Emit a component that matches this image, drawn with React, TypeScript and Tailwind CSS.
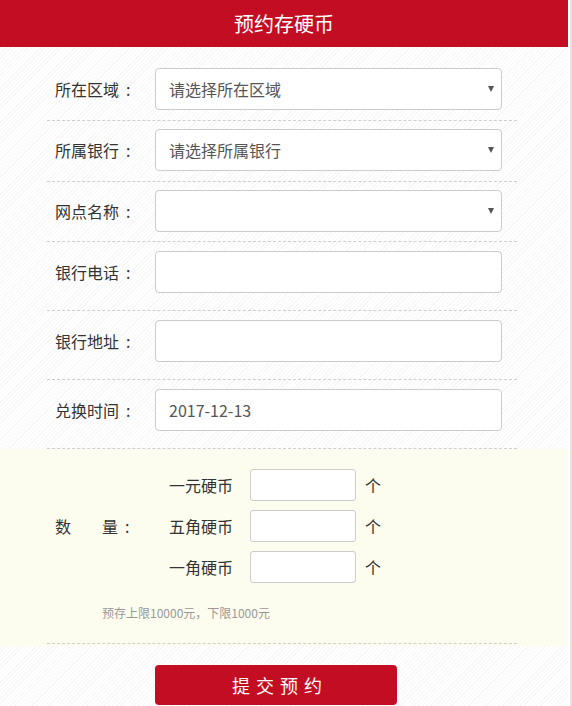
import React from 'react';

const font = { fontFamily: '"Noto Sans CJK SC", "Noto Sans", sans-serif' };

interface FieldProps {
    label: string;
    value?: string;
    select?: boolean;
    pad: string;
}

function Field({ label, value, select, pad }: FieldProps) {
    return (
        <div className={`flex items-center border-b border-dashed border-[#cfcfcf] ${pad}`}>
            <div className="flex w-[108px] pl-[8px] text-[16px] text-[#333]">
                {label}
                <span className="ml-[7px]">:</span>
            </div>
            <div className="relative flex h-[42px] w-[347px] items-center rounded-[4px] border border-[#cccccc] bg-white px-[13px] text-[16px] text-[#555]">
                {value}
                {select && (
                    <span className="absolute right-[7px] top-[17px] h-0 w-0 border-x-[3px] border-t-[6px] border-x-transparent border-t-[#555]" />
                )}
            </div>
        </div>
    );
}

function CoinRow({ label }: { label: string }) {
    return (
        <div className="flex items-center">
            <div className="w-[80px] text-right text-[16px] text-[#333]">{label}</div>
            <div className="ml-[17px] h-[32px] w-[106px] rounded-[3px] border border-[#cccccc] bg-white" />
            <div className="ml-[9px] text-[16px] text-[#333]">个</div>
        </div>
    );
}

export default function App() {
    return (
        <div style={font} className="flex h-[706px] w-[572px] overflow-hidden bg-white">
            <div className="flex h-full w-[568px] flex-col bg-[repeating-linear-gradient(135deg,#ffffff_0px,#ffffff_2px,#f7f7f7_2px,#f7f7f7_3px)]">
                <div className="flex h-[47px] shrink-0 items-center justify-center bg-[#c30d23] text-[20px] text-white">
                    预约存硬币
                </div>

                <div className="ml-[47px] mr-[51px] flex flex-col">
                    <Field label="所在区域" value="请选择所在区域" select pad="pt-[21px] pb-[10px]" />
                    <Field label="所属银行" value="请选择所属银行" select pad="pt-[8px] pb-[10px]" />
                    <Field label="网点名称" select pad="pt-[8px] pb-[9px]" />
                    <Field label="银行电话" pad="pt-[9px] pb-[17px]" />
                    <Field label="银行地址" pad="pt-[9px] pb-[17px]" />
                    <Field label="兑换时间" value="2017-12-13" pad="pt-[9px] pb-[17px]" />
                </div>

                <div className="bg-[#fdfdef] pb-[2px] pl-[47px] pr-[51px]">
                    <div className="border-b border-dashed border-[#cfcfcf] pb-[21px] pt-[20px]">
                        <div className="flex items-center">
                            <div className="flex w-[90px] pl-[8px] text-[16px] text-[#333]">
                                <span>数</span>
                                <span className="ml-[31px]">量</span>
                                <span className="ml-[7px]">:</span>
                            </div>
                            <div className="ml-[16px] flex flex-col gap-[9px]">
                                <CoinRow label="一元硬币" />
                                <CoinRow label="五角硬币" />
                                <CoinRow label="一角硬币" />
                            </div>
                        </div>
                        <div className="mt-[21px] pl-[55px] text-[12px] text-[#999]">
                            预存上限10000元，下限1000元
                        </div>
                    </div>
                </div>

                <div className="flex pl-[155px] pt-[19px]">
                    <button className="h-[40px] w-[242px] rounded-[4px] bg-[#c30d23] pl-[8px] text-[18px] tracking-[6px] text-white">
                        提交预约
                    </button>
                </div>
            </div>
            <div className="h-full w-[2px] bg-white" />
            <div className="h-full w-[2px] bg-[#e4e4e4]" />
        </div>
    );
}
